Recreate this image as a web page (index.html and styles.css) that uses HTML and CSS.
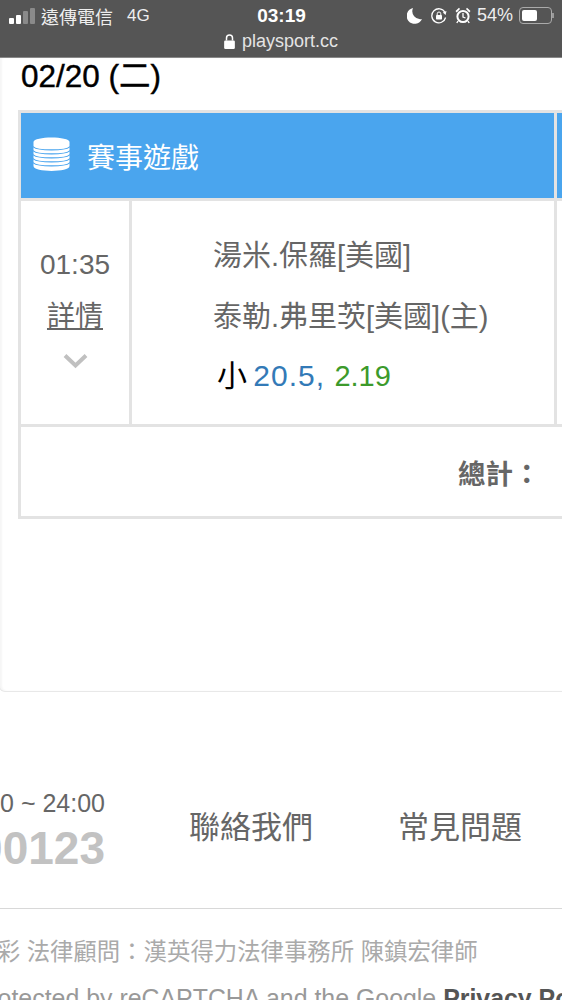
FILE: index.html
```html
<!DOCTYPE html>
<html lang="zh-Hant">
<head>
  <meta charset="UTF-8">
  <title>playsport.cc</title>
  <link rel="stylesheet" href="styles.css">
</head>
<body>
  <div class="statusbar">
    <div class="status-row">
      <div class="status-left">
        <svg class="signal" width="26" height="16" viewBox="0 0 26 16">
          <rect x="0" y="10" width="5" height="6" rx="1" fill="#fff"/>
          <rect x="7" y="7" width="5" height="9" rx="1" fill="#fff"/>
          <rect x="14" y="3" width="5" height="13" rx="1" fill="#8a8a8a"/>
          <rect x="21" y="0" width="5" height="16" rx="1" fill="#8a8a8a"/>
        </svg>
        <span class="carrier">遠傳電信</span>
        <span class="network">4G</span>
      </div>
      <div class="clock">03:19</div>
      <div class="status-right">
        <svg class="st-icon" width="16" height="17" viewBox="0 0 16 17">
          <path d="M6 1 A8 8 0 1 0 15 12 A8 8 0 0 1 6 1 Z" fill="#fff"/>
        </svg>
        <svg class="st-icon" width="16" height="16" viewBox="0 0 16 16">
          <path d="M14.6 9.5 A7 7 0 1 1 14 4.5" fill="none" stroke="#fff" stroke-width="1.3"/>
          <path d="M15.5 3 L14.6 7 L11.8 4.6 Z" fill="#fff"/>
          <rect x="5" y="7" width="6" height="4.5" rx=".7" fill="#fff"/>
          <path d="M6.2 7 V5.8 a1.8 1.8 0 0 1 3.6 0 V7" fill="none" stroke="#fff" stroke-width="1"/>
        </svg>
        <svg width="16" height="17" viewBox="0 0 16 17">
          <circle cx="8" cy="9.5" r="5.6" fill="none" stroke="#fff" stroke-width="2"/>
          <path d="M8 6 V10 L10.5 11" fill="none" stroke="#fff" stroke-width="1.3"/>
          <path d="M0.5 4 L4 0.8 L5 2 L1.7 5.4 Z M15.5 4 L12 0.8 L11 2 L14.3 5.4 Z" fill="#fff"/>
          <path d="M3 14 L1.8 16 M13 14 L14.2 16" stroke="#fff" stroke-width="1.4"/>
        </svg>
        <span class="battery-pct">54%</span>
        <div class="battery"><div class="battery-fill"></div></div>
        <div class="battery-tip"></div>
      </div>
    </div>
    <div class="url-row">
      <svg width="11" height="15" viewBox="0 0 10 14">
        <rect x="0" y="6" width="10" height="8" rx="1.2" fill="#fff"/>
        <path d="M2.2 6 V3.8 a2.8 2.8 0 0 1 5.6 0 V6" fill="none" stroke="#fff" stroke-width="1.4"/>
      </svg>
      <span>playsport.cc</span>
    </div>
  </div>

  <div class="panel">
    <h3 class="date">02/20 (二)</h3>
    <table class="game-table">
      <colgroup>
        <col class="col-time">
        <col class="col-game">
        <col class="col-more">
      </colgroup>
      <tr class="head-row">
        <th colspan="2">
          <div class="head-title">
            <svg width="37" height="37" viewBox="0 0 37 37">
              <path d="M0.5 5 C0.5 -1 36.5 -1 36.5 5 V29 C36.5 35.500 0.500 35.500 0.500 29 Z" fill="#fff"/>
              <path d="M0 9.500 C4 14 33 14 37 9.500 M0 13.500 C4 18 33 18 37 13.500 M0 17.500 C4 22 33 22 37 17.500 M0 21.500 C4 26 33 26 37 21.500 M0 25.500 C4 30 33 30 37 25.500" fill="none" stroke="#4aa5ee" stroke-width="1.100"/>
            </svg>
            <span>賽事遊戲</span>
          </div>
        </th>
        <th></th>
      </tr>
      <tr class="game-row">
        <td class="time-cell">
          <div class="time">01:35</div>
          <a class="detail" href="#">詳情</a>
          <svg class="chevron" width="25" height="16" viewBox="0 0 25 16">
            <path d="M2 2.500 L12.500 12.500 L23 2.500" fill="none" stroke="#c0c0c0" stroke-width="4"/>
          </svg>
        </td>
        <td class="game-cell">
          <div class="team">湯米.保羅[美國]</div>
          <div class="team">泰勒.弗里茨[美國](主)</div>
          <div class="pick">小 <span class="odds-line">20.5,</span> <span class="odds-rate">2.19</span></div>
        </td>
        <td></td>
      </tr>
      <tr class="total-row">
        <td colspan="2" class="total-cell">總計：</td>
        <td class="total-end"></td>
      </tr>
    </table>
  </div>

  <div class="footer-top">
    <div class="service">
      <div class="hours">10:00 ~ 24:00</div>
      <div class="phone">0800-000123</div>
    </div>
    <a class="foot-link" href="#">聯絡我們</a>
    <a class="foot-link" href="#">常見問題</a>
  </div>
  <div class="footer-bottom">
    <div class="legal">玩運彩 法律顧問：漢英得力法律事務所 陳鎮宏律師</div>
    <div class="recaptcha">This site is protected by reCAPTCHA and the Google <b>Privacy Policy</b></div>
  </div>
</body>
</html>
```

FILE: styles.css
```css
html, body {
  margin: 0;
  height: 1000px;
  overflow: hidden;
}

body {
  width: 562px;
  background: #fff;
  font-family: "Liberation Sans", "Noto Sans CJK TC", sans-serif;
  color: #666;
}

.statusbar {
  height: 58px;
  box-sizing: border-box;
  background: #555;
  border-bottom: 1px solid #888;
  color: #eee;
}

.status-row {
  display: grid;
  grid-template-columns: 1fr auto 1fr;
  align-items: center;
  height: 31px;
  padding: 0 8px 0 9px;
}

.status-left {
  display: flex;
  align-items: center;
}

.signal {
  margin-right: 6px;
}

.carrier {
  font-size: 18px;
  margin-right: 14px;
}

.network {
  font-size: 17px;
}

.clock {
  font-size: 19px;
  font-weight: bold;
  color: #fff;
}

.status-right {
  display: flex;
  align-items: center;
  justify-content: flex-end;
  gap: 6px;
}

.st-icon {
  margin-right: 2px;
}

.battery-pct {
  font-size: 18px;
}

.battery {
  flex: none;
  width: 27px;
  height: 11px;
  padding: 2px;
  border: 1px solid #aaa;
  border-radius: 4px;
  margin-right: -6px;
}

.battery-fill {
  width: 15px;
  height: 11px;
  background: #fff;
  border-radius: 2px;
}

.battery-tip {
  width: 2px;
  height: 5px;
  background: #999;
}

.url-row {
  display: flex;
  align-items: center;
  justify-content: center;
  gap: 7px;
  font-size: 18px;
  color: #e4e4e4;
}

.panel {
  height: 634px;
  box-sizing: border-box;
  border: 1px solid #e8e8e8;
  border-top: 0;
  border-radius: 0 0 6px 6px;
  margin: 0 -10px 0 -1px;
  padding-left: 18px;
  box-shadow: inset 2px 0 2px #f6f6f6;
}

.date {
  margin: 0 0 0 3px;
  height: 52px;
  padding-top: 2px;
  box-sizing: border-box;
  font-size: 31.5px;
  line-height: 33px;
  font-weight: normal;
  color: #000;
  -webkit-text-stroke: .4px #000;
}

.game-table {
  width: 640px;
  table-layout: fixed;
  border-collapse: collapse;
  border: 3px solid #e3e3e3;
}

.col-time {
  width: 111px;
}

.col-game {
  width: 425px;
}

.game-table td,
.game-table th {
  border: 3px solid #e3e3e3;
  padding: 0;
}

.head-row {
  height: 88px;
}

.head-row th {
  background: #4aa5ee;
  color: #fff;
  font-weight: normal;
  text-align: left;
}

.head-title {
  display: flex;
  align-items: center;
  gap: 17px;
  padding-left: 12px;
  font-size: 28px;
}

.game-row {
  height: 226px;
}

.time-cell {
  text-align: center;
  vertical-align: top;
  padding-top: 47px !important;
}

.time {
  font-size: 28px;
  line-height: 34px;
}

.detail {
  display: block;
  margin-top: 17px;
  font-size: 28px;
  line-height: 36px;
  color: #666;
}

.chevron {
  display: block;
  margin: 18px auto 0;
}

.game-cell {
  vertical-align: top;
  padding: 37px 0 0 81px !important;
  font-size: 29px;
}

.team {
  line-height: 36px;
  margin-bottom: 25px;
  white-space: nowrap;
}

.pick {
  color: #000;
  line-height: 36px;
  margin: -2px 0 0 4px;
  font-size: 30px;
}

.odds-line {
  margin-left: -2px;
  letter-spacing: 1px;
  color: #337ab7;
}

.odds-rate {
  margin-left: 1px;
  font-size: 29px;
  color: #3c9a2b;
}

.total-row {
  height: 92px;
}

.total-cell {
  text-align: right;
  padding-right: 15px !important;
  font-size: 27.500px;
  font-weight: bold;
  border-right: 0 !important;
}

.total-end {
  border-left: 0 !important;
}

.footer-top {
  display: flex;
  align-items: flex-start;
  height: 217px;
  box-sizing: border-box;
  padding-top: 95px;
  border-bottom: 1px solid #d8d8d8;
}

.service {
  flex: none;
  display: flex;
  flex-direction: column;
  align-items: flex-end;
  width: 105px;
  overflow: hidden;
  white-space: nowrap;
  margin-right: 84px;
}

.hours {
  font-size: 25px;
  line-height: 32px;
}

.phone {
  font-size: 46px;
  line-height: 58px;
  font-weight: bold;
  color: #c2c2c2;
}

.foot-link {
  flex: none;
  font-size: 31px;
  line-height: 70px;
  margin: 6px 85px 0 0;
  color: #666;
  text-decoration: none;
  white-space: nowrap;
}

.footer-bottom {
  white-space: nowrap;
  font-size: 23.400px;
  color: #aaa;
}

.legal {
  margin-left: -50px;
  padding-top: 27px;
  line-height: 32px;
}

.recaptcha {
  margin-left: -149px;
  padding-top: 14px;
  font-size: 24.900px;
  line-height: 32px;
  color: #999;
}

.recaptcha b {
  color: #555;
}
```
